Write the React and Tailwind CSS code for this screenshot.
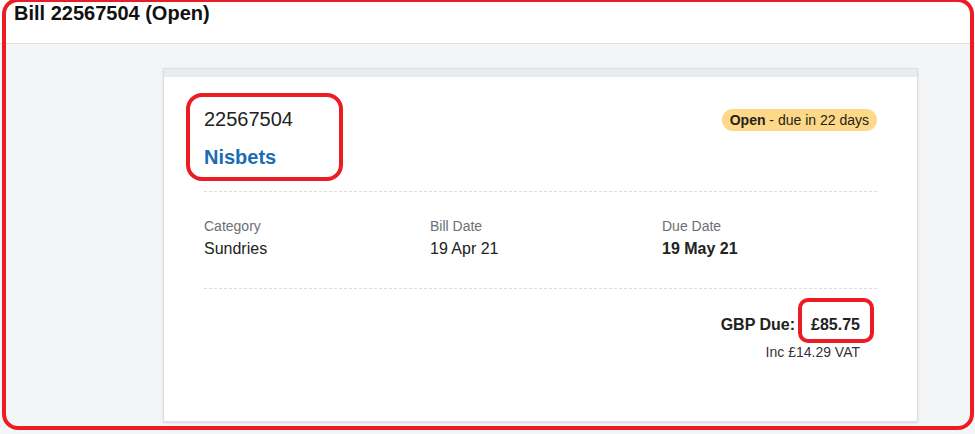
import React from "react";

export default function App() {
  return (
    <div className="relative w-[975px] h-[434px] overflow-hidden bg-[#f4f5f7]" style={{ fontFamily: '"Liberation Sans", Arial, sans-serif' }}>
      <div className="h-[44px] bg-white border-b border-[#dcdee2] px-[14px]">
        <h1 className="text-[20px] font-bold leading-[24px] pt-[1px] text-[#111]">Bill 22567504 (Open)</h1>
      </div>
      <div className="pl-[163px] pt-[24px]">
        <div className="w-[755px] h-[354px] bg-white border border-[#dcdee2] shadow-[0_1px_2px_rgba(0,0,0,0.12)]">
          <div className="h-[8px] bg-[#e9ecee]"></div>
          <div className="px-[40px]">
            <div className="flex justify-between items-start pt-[30px] pb-[22px] border-b border-dashed border-[#dddddd]">
              <div>
                <div className="text-[20px] leading-[24px] text-[#222]">22567504</div>
                <div className="text-[20px] leading-[24px] font-bold text-[#1a6cb3] mt-[14px]">Nisbets</div>
              </div>
              <div className="mt-[2px] rounded-full bg-[#fdd886] px-[8px] h-[22px] flex items-center text-[14px] text-[#222]">
                <span className="font-bold">Open</span>&nbsp;- due in 22 days
              </div>
            </div>
            <div className="flex pt-[25px] pb-[29px] border-b border-dashed border-[#dddddd]">
              <div className="w-[226px]">
                <div className="text-[14px] leading-[18px] text-[#6b6f76]">Category</div>
                <div className="text-[16px] leading-[20px] text-[#222] mt-[4px]">Sundries</div>
              </div>
              <div className="w-[232px]">
                <div className="text-[14px] leading-[18px] text-[#6b6f76]">Bill Date</div>
                <div className="text-[16px] leading-[20px] text-[#222] mt-[4px]">19 Apr 21</div>
              </div>
              <div>
                <div className="text-[14px] leading-[18px] text-[#6b6f76]">Due Date</div>
                <div className="text-[16px] leading-[20px] font-bold text-[#222] mt-[4px]">19 May 21</div>
              </div>
            </div>
            <div className="flex flex-col items-end pr-[17px] pt-[26px]">
              <div className="text-[16px] leading-[20px] font-bold text-[#222] flex gap-[16px]">
                <span>GBP Due:</span>
                <span>£85.75</span>
              </div>
              <div className="text-[14px] leading-[16px] text-[#333] mt-[9px]">Inc £14.29 VAT</div>
            </div>
          </div>
        </div>
      </div>
      {/* red annotations */}
      <div className="absolute left-[2px] top-[-2px] right-[1px] bottom-[4px] border-[4px] border-[#ec1c24] rounded-[16px] pointer-events-none"></div>
      <div className="absolute left-[186px] top-[93px] w-[157px] h-[88px] border-[4px] border-[#ec1c24] rounded-[16px] pointer-events-none"></div>
      <div className="absolute left-[798px] top-[298px] w-[76px] h-[45px] border-[4px] border-[#ec1c24] rounded-[10px] pointer-events-none"></div>
    </div>
  );
}
